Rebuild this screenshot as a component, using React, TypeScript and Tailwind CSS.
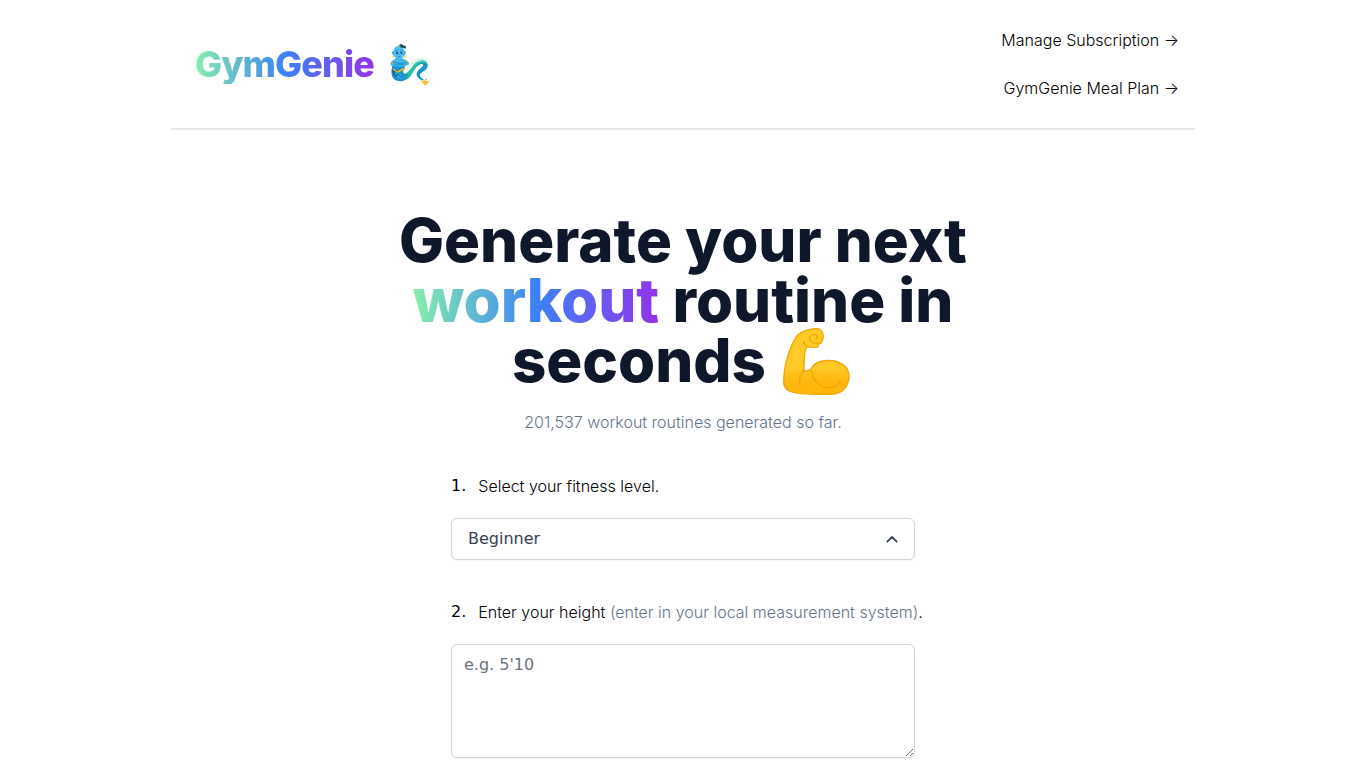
import { useState } from "react";

const GenieIcon = () => (
    <svg viewBox="17 13 120 123" className="h-[41px] w-10" aria-hidden="true">
        <path d="M27 80 C22 96 23 119 43 120 C72 124 78 97 92 81 C103 67 120 65 126 76 C132 88 111 94 104 103 C98 111 108 119 117 121" fill="none" stroke="#14b8a6" strokeWidth="5" />
        <path d="M24 78 C19 101 21 118 39 123 C58 128 72 119 80 107 C88 94 95 79 108 74 C115 71 119 75 115 80 C109 86 96 94 97 106 C98 115 109 118 119 121 C110 114 105 110 107 104 C110 96 128 91 130 79 C132 66 116 57 101 66 C86 75 77 95 66 101 C58 105 51 98 62 86 L61 79 Z" fill="#1c91d0" />
        <path d="M24 86 L40 97 L34 111 C25 107 22 97 24 86 Z" fill="#1464a5" />
        <path d="M66 101 C78 93 84 77 98 67 C111 58 128 64 130 76 C121 65 105 69 97 78 C86 91 82 112 62 119 C73 109 72 106 66 101 Z" fill="#22c5a0" />
        <path d="M81 73 C94 57 114 50 126 64 C111 56 96 63 87 75 M75 81 C87 70 100 63 111 66" fill="none" stroke="#a8eadb" strokeWidth="2" />
        <path d="M26 86 L39 95 L61 83 L62 88 L40 100 L25 90 Z" fill="#f9b71b" />
        <path d="M38 96 L32 105 M42 97 L49 105" stroke="#26b6a0" strokeWidth="4" />
        <path d="M35 55 L52 55 L66 62 C75 66 77 73 70 76 L56 81 L30 80 C18 80 16 73 20 67 Z" fill="#3cb6ec" />
        <path d="M24 70 C33 65 43 73 58 75 M67 69 C55 67 44 76 32 76" fill="none" stroke="#157dbb" strokeWidth="2" strokeLinecap="round" />
        <path d="M63 62 L72 65 L70 68 L63 65 Z M20 70 L25 68 L27 72 L22 74 Z" fill="#f9b71b" />
        <path d="M31 35 C20 30 21 48 33 49 M57 35 C68 30 67 48 55 49" fill="#2da5e2" />
        <path d="M28 34 C27 14 60 14 60 34 L60 43 C59 52 52 59 44 59 C36 59 29 52 28 43 Z" fill="#4bc1f2" />
        <path d="M44 19 C45 11 56 14 57 18 L64 18 L65 27 L57 24 L47 23 Z" fill="#173d5d" />
        <path d="M42 18 L49 19 L48 22 L42 21 Z M26 48 L29 48 L29 54 L25 54 Z M60 48 L63 48 L63 54 L59 54 Z" fill="#f9b71b" />
        <path d="M34 34 Q38 30 41 34 M48 34 Q52 30 55 34" fill="none" stroke="#165888" strokeWidth="2" />
        <circle cx="38" cy="40" r="3" fill="#193d5c" />
        <circle cx="51" cy="40" r="3" fill="#193d5c" />
        <path d="M43 45 L46 45 M40 51 Q44 53 48 51" fill="none" stroke="#17699f" strokeWidth="2" />
        <circle cx="43" cy="112" r="2" fill="#70d8ff" />
        <circle cx="49" cy="117" r="1.5" fill="#70d8ff" />
        <path d="M107 121 L117 125 L122 121 L128 125 L136 123 L130 131 L125 132 L129 136 L117 136 L120 132 C113 130 112 125 107 121 Z" fill="#ffb91d" />
        <path d="M122 121 L126 118" stroke="#ca7c0b" strokeWidth="3" />
    </svg>
);

const MuscleIcon = () => (
    <svg viewBox="0 0 200 200" className="-mb-2 -mt-4 mx-1 inline-block h-[67px] w-[67px] align-middle" aria-hidden="true">
        <defs>
            <linearGradient id="muscle" x1="0" y1="0" x2="0" y2="1">
                <stop offset="60%" stopColor="#ffc928" />
                <stop offset="80%" stopColor="#ffb70e" />
            </linearGradient>
        </defs>
        <g stroke="#f2a600" strokeWidth="4" strokeLinecap="round" strokeLinejoin="round">
            <path d="M89 3 C72 6 55 11 44 21 C30 38 22 60 14 85 C4 115 2 145 2 165 C4 185 20 192 45 195 C80 198 120 198 150 197 C184 195 198 165 197 142 C196 115 170 97 136 97 C105 97 90 108 82 124 C74 129 67 127 62 129 C63 110 63 90 65 75 C67 63 70 57 74 55 C82 59 95 58 103 57 C107 53 106 50 105 47 C112 48 116 43 117 36 C121 30 121 22 118 15 C115 8 110 2 102 2 Z" fill="url(#muscle)" />
            <path d="M98 33 C108 24 100 19 92 20 C81 21 76 29 80 36 C84 45 98 47 109 44 M61 41 C64 49 69 53 75 56 M62 129 C52 138 48 152 50 168 M86 130 C90 155 108 177 133 178 C152 178 165 171 171 158" fill="none" />
        </g>
    </svg>
);

const App = () => {
    const [level, setLevel] = useState("Beginner");
    const [height, setHeight] = useState("");

    return (
        <div className="mx-auto flex max-w-5xl flex-col items-center font-['Inter',sans-serif] font-light text-black">
            <header className="flex w-full items-center justify-between border-b-2 border-[#e5e7eb] px-2 py-4 sm:px-4">
                <a href="#" className="ml-2 flex items-center gap-4">
                    <h1 className="bg-linear-to-r/srgb from-[#86efac] via-[#3b82f6] to-[#9333ea] bg-clip-text text-4xl font-extrabold tracking-tight text-transparent">GymGenie</h1>
                    <GenieIcon />
                </a>
                <nav className="flex flex-col text-right">
                    <a href="#" className="py-3">Manage Subscription →</a>
                    <a href="#" className="py-3">GymGenie Meal Plan →</a>
                </nav>
            </header>
            <main className="mt-20 flex w-full flex-col items-center px-4 pb-2">
                <h2 className="max-w-[708px] text-center text-6xl font-extrabold text-[#0f172a]">
                    Generate your next <span className="bg-linear-to-r/srgb from-[#86efac] via-[#3b82f6] to-[#9333ea] bg-clip-text text-transparent">workout</span> routine in <span className="block h-[60px]">seconds <MuscleIcon /></span>
                </h2>
                <p className="mt-5 text-center text-[#64748b]">201,537 workout routines generated so far.</p>
                <form className="mt-10 flex w-full max-w-[464px] flex-col">
                    <label htmlFor="level" className="flex gap-3">
                        <span className="font-['DejaVu_Sans',sans-serif] font-normal">1.</span>
                        <span>Select your fitness level.</span>
                    </label>
                    <div className="relative mt-5">
                        <select
                            id="level"
                            value={level}
                            onChange={(e) => setLevel(e.target.value)}
                            className="w-full appearance-none rounded-md border border-[#d1d5db] bg-white px-4 py-2 font-['DejaVu_Sans',sans-serif] font-normal text-[#374151] shadow-xs"
                        >
                            <option>Beginner</option>
                        </select>
                        <svg viewBox="0 0 20 20" fill="none" stroke="currentColor" strokeWidth="1.7" className="pointer-events-none absolute right-[13px] top-[11px] h-5 w-5 text-[#374151]" aria-hidden="true">
                            <path d="M5.3 12.7 L10 7.9 L14.7 12.7" strokeLinecap="round" strokeLinejoin="round" />
                        </svg>
                    </div>
                    <label htmlFor="height" className="mt-10 flex gap-3">
                        <span className="font-['DejaVu_Sans',sans-serif] font-normal">2.</span>
                        <span className="sm:whitespace-nowrap">Enter your height <span className="text-[#64748b]">(enter in your local measurement system)</span>.</span>
                    </label>
                    <textarea
                        id="height"
                        rows={4}
                        value={height}
                        onChange={(e) => setHeight(e.target.value)}
                        placeholder="e.g. 5'10"
                        className="mt-5 w-full rounded-md border border-[#d1d5db] px-3 py-2 font-['DejaVu_Sans',sans-serif] font-normal shadow-xs placeholder:text-[#6b7280]"
                    />
                </form>
            </main>
        </div>
    );
};

export default App;
